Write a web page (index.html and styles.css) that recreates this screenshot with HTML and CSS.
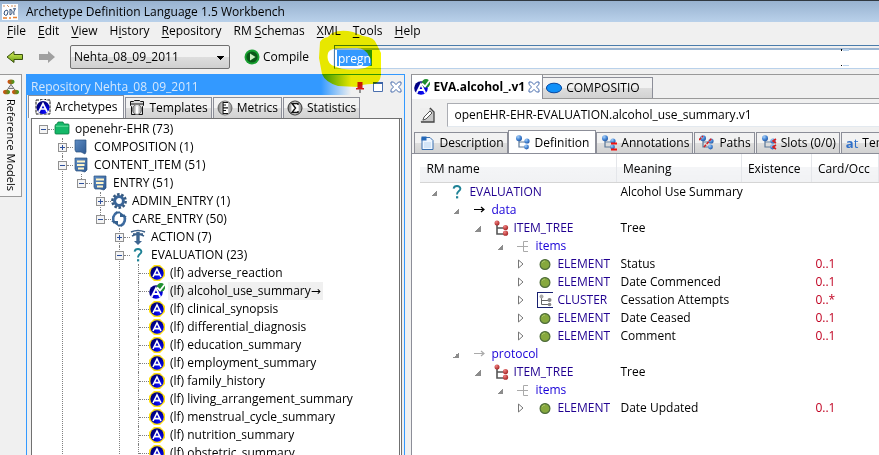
FILE: index.html
```html
<!DOCTYPE html>
<html lang="en">
<head>
<meta charset="utf-8">
<title>Archetype Definition Language 1.5 Workbench</title>
<link rel="stylesheet" href="styles.css">
</head>
<body>
<svg class="defs" width="0" height="0" aria-hidden="true">
  <defs>
    <linearGradient id="g-blue" x1="0" y1="0" x2="1" y2="1"><stop offset="0" stop-color="#5d8cc4"/><stop offset="1" stop-color="#2f5a92"/></linearGradient>
    <radialGradient id="g-ball" cx=".35" cy=".3" r=".8"><stop offset="0" stop-color="#a8d0f8"/><stop offset=".5" stop-color="#4a8ad8"/><stop offset="1" stop-color="#1c4f9c"/></radialGradient>
    <radialGradient id="g-red" cx=".35" cy=".3" r=".8"><stop offset="0" stop-color="#f08080"/><stop offset="1" stop-color="#a01c1c"/></radialGradient>
    <linearGradient id="g-lime" x1="0" y1="0" x2="0" y2="1"><stop offset="0" stop-color="#d8f060"/><stop offset="1" stop-color="#6aa010"/></linearGradient>
    <linearGradient id="g-mix" x1="0" y1="0" x2="1" y2="0"><stop offset="0" stop-color="#e04810"/><stop offset="1" stop-color="#38a020"/></linearGradient>
    <radialGradient id="g-navy" cx=".7" cy=".8" r=".7"><stop offset="0" stop-color="#1010ff"/><stop offset=".5" stop-color="#0000d0"/><stop offset="1" stop-color="#000080"/></radialGradient>
    <linearGradient id="g-silver" x1="0" y1="0" x2="1" y2="0"><stop offset="0" stop-color="#777"/><stop offset=".5" stop-color="#fff"/><stop offset="1" stop-color="#888"/></linearGradient>
    <symbol id="arch" viewBox="0 0 16 16"><path d="M5 0h6l5 5v6l-5 5H5l-5-5V5z" fill="#ffe010"/><circle cx="8" cy="8" r="6.700" fill="url(#g-navy)"/><path d="M4 12L8 4l4 8M5.500 9.600h5" fill="none" stroke="#fff" stroke-width="1.600"/></symbol>
    <symbol id="arch-ok" viewBox="0 0 16 16"><circle cx="7" cy="9" r="6.8" fill="url(#g-navy)"/><path d="M2.6 14L7 5l4.2 9M4.5 11h5" fill="none" stroke="#fff" stroke-width="1.8"/><circle cx="12" cy="4.2" r="4.2" fill="#209030"/><path d="M8 4.5l3 3L16 1" fill="none" stroke="#fff" stroke-width="1.8"/></symbol>
    <symbol id="arch-tab" viewBox="0 0 16 16"><path d="M1 1h4l2-1h3l1 1h4v14H1z" fill="#fff" stroke="#111" stroke-dasharray="3 1"/><circle cx="8" cy="8.5" r="6.5" fill="url(#g-navy)"/><path d="M3.8 13L8 4.6l4.2 8.4M5.6 10h4.8" fill="none" stroke="#fff" stroke-width="1.7"/></symbol>
    <symbol id="tpl" viewBox="0 0 16 16"><path d="M1.5 1.5h3l1-1h5l1 1h3v4l-1 1v8h-11v-8l-1-1z" fill="#ddd" stroke="#111"/><path d="M1 4h14" stroke="#111"/><ellipse cx="8" cy="9.5" rx="4.5" ry="5" fill="url(#g-silver)" stroke="#777"/><path d="M7 7h2v6H7z" fill="#fff"/></symbol>
    <symbol id="metric" viewBox="0 0 16 16"><circle cx="8" cy="8" r="7" fill="url(#g-silver)" stroke="#555" stroke-width=".8"/><path d="M5 2h6v12H5z" fill="#fff"/><path d="M6 2v12M6 2.5h5M6 5h3M6 7.8h5M6 10.5h3M6 13.5h5" stroke="#111" stroke-width="1.2"/></symbol>
    <symbol id="stat" viewBox="0 0 16 16"><circle cx="8" cy="8" r="7" fill="url(#g-silver)" stroke="#333"/><path d="M4.5 3h7v10h-7z" fill="#fff"/><path d="M11 5V3.5H5L8.5 8 5 12.5h6V11" fill="none" stroke="#111" stroke-width="1.4"/></symbol>
    <symbol id="folder" viewBox="0 0 16 16"><path d="M1 5q0-2 2-2l1-2h5l1 2h4q1 0 1 1v8q0 1-1 1H2q-1 0-1-1z" fill="#14b868" stroke="#087a40" stroke-width=".8"/><path d="M1.8 5.2h12.6" stroke="#6ae0a0"/></symbol>
    <symbol id="book" viewBox="0 0 16 16"><path d="M2 1h11v12l-1 2-4-2-5 0-1-2z" fill="url(#g-blue)" stroke="#2a5080" stroke-width=".7"/></symbol>
    <symbol id="booklines" viewBox="0 0 16 16"><path d="M2 1h12v12l-2 2-4-1-5 0-1-2z" fill="url(#g-blue)" stroke="#2a5080" stroke-width=".7"/><path d="M4 4.5h8M4 8h7.500M5 11.500h6" stroke="#fff4c8" stroke-width="2"/></symbol>
    <symbol id="gear" viewBox="0 0 16 16"><circle cx="8" cy="8" r="4.400" fill="none" stroke="#3a6598" stroke-width="3"/><circle cx="8" cy="8" r="6.700" fill="none" stroke="#34587f" stroke-width="2.400" stroke-dasharray="2.600 1.600"/></symbol>
    <symbol id="cycle" viewBox="0 0 16 16"><path d="M6 1.500A7 7 0 0 0 3.500 12M10 14.500A7 7 0 0 0 12.500 4" fill="none" stroke="#3d6ba0" stroke-width="2.6"/><path d="M0 10l7 0v5zM16 6l-7 0V1z" fill="#34608f"/><path d="M5 1.500h4M7 14.500h4" stroke="#34608f" stroke-width="2"/></symbol>
    <symbol id="action" viewBox="0 0 16 16"><path d="M1 3q7-3 14 0M2 7q6-3 12 0M3 5h10" fill="none" stroke="#3a5f88" stroke-width="1.500"/><path d="M6.300 3h3.400v9H12l-4 4-4-4h2.300z" fill="#3d6590"/></symbol>
    <symbol id="quest" viewBox="0 0 16 16"><path d="M4.600 4.600Q5 2 8 2t3.400 2.700C11.400 7.300 8 7 8 10.600" fill="none" stroke="#1f8296" stroke-width="1.900"/><path d="M7 12.200h2.200v2.200H7z" fill="#1f8296"/></symbol>
    <symbol id="arrow" viewBox="0 0 16 16"><path d="M3 7.500h10M10 5l3 2.500-3 2.500" fill="none" stroke="currentColor" stroke-width="1.200"/></symbol>
    <symbol id="tree-red" viewBox="0 0 16 16"><path d="M4 3v11h8M4 8h8" fill="none" stroke="#555" stroke-width="1.600"/><circle cx="4" cy="3" r="2.500" fill="url(#g-red)"/><circle cx="12.500" cy="7.500" r="2.600" fill="url(#g-red)"/><circle cx="12.500" cy="13.200" r="2.600" fill="url(#g-red)"/></symbol>
    <symbol id="fork" viewBox="0 0 16 16"><path d="M2 8.500h6M13 3.500H8.500v10H13M8 8.500h5" fill="none" stroke="#aaa"/></symbol>
    <symbol id="ball" viewBox="0 0 16 16"><circle cx="8" cy="8.500" r="4.900" fill="#86a83e" stroke="#4c6a38" stroke-width="1.200"/><path d="M5 7q1-2 3-2" fill="none" stroke="#a9c66a"/></symbol>
    <symbol id="cluster" viewBox="0 0 16 16"><path d="M0 0h16v1H1v14h15v1H0z" fill="#182070"/><path d="M4.500 5v7.500h8M4.500 8.500h8" fill="none" stroke="#666"/><circle cx="4.500" cy="4.500" r="2" fill="#aaa"/><circle cx="12.500" cy="8" r="2" fill="#888"/><circle cx="12.500" cy="12.500" r="1.800" fill="#888"/></symbol>
    <symbol id="tree-blue" viewBox="0 0 16 16"><path d="M4 3v9h8M4 7h7" fill="none" stroke="#5c7898" stroke-width="1.200"/><circle cx="4" cy="3.200" r="3" fill="url(#g-ball)"/><circle cx="12" cy="6" r="2.600" fill="url(#g-ball)"/><circle cx="11.500" cy="12" r="2.400" fill="url(#g-ball)"/></symbol>
    <symbol id="doc" viewBox="0 0 16 16"><path d="M3 2.500h8l3 3v9H3z" fill="#eef6ff" stroke="#3a70b0"/><path d="M5 8h7M5 10h7M5 12h7" stroke="#b8d4f0"/><path d="M2.500 1.500h5v4h-5z" fill="#2468b8"/></symbol>
    <symbol id="close" viewBox="0 0 12 12"><path d="M1 1h2.500L6 3.600 8.500 1H11v2.500L8.400 6 11 8.500V11H8.500L6 8.400 3.500 11H1V8.500L3.600 6 1 3.500z" fill="#fff" stroke="#4a6fae"/></symbol>
  </defs>
</svg>

<div class="app">
  <header class="titlebar">
    <svg class="logo" viewBox="0 0 16 16" aria-hidden="true"><path d="M0 0h16v16H0z" fill="#fff"/><path d="M1 2h2M5 1l2 2M9 2h2M13 1v2" stroke="#d09060"/><path d="M2 10q0-4 3-4 2 1 0 5-2 1-3-1M8 5v6q3-1 2-4T8 6M11 5q2-1 3 0M13 5q-2 3-1 6" fill="none" stroke="#32507a"/><path d="M1 14h4M7 14h2M11 13.500h4" stroke="#e88030" stroke-width="1.500"/></svg>
    <h1>Archetype Definition Language 1.5 Workbench</h1>
  </header>

  <nav class="menubar" aria-label="Main menu">
    <button><u>F</u>ile</button><button><u>E</u>dit</button><button><u>V</u>iew</button><button>H<u>i</u>story</button><button><u>R</u>epository</button><button>RM <u>S</u>chemas</button><button><u>X</u>ML</button><button><u>T</u>ools</button><button><u>H</u>elp</button>
  </nav>

  <div class="toolbar">
    <button class="nav" aria-label="Back"><svg viewBox="0 0 18 14"><path d="M1 7l7-5.500V4.500h8.500v5H8v3z" fill="url(#g-lime)" stroke="#3a5010"/></svg></button>
    <button class="nav" aria-label="Forward"><svg viewBox="0 0 18 14"><path d="M17 7l-7-6v3H1v6h9v3z" fill="#a0a0a0"/></svg></button>
    <select class="repo" aria-label="Repository"><option>Nehta_08_09_2011</option></select>
    <button class="compile"><svg viewBox="0 0 16 16" aria-hidden="true"><circle cx="8" cy="8" r="7.500" fill="#18a030"/><circle cx="8" cy="8" r="5.600" fill="#0a5818"/><path d="M6 4.500L11.500 8 6 11.500z" fill="#c8f0c0"/></svg>Compile</button>
    <div class="search">
      <input type="text" value="pregn" aria-label="Search">
      <svg class="marker-gap" viewBox="0 0 64 60" aria-hidden="true"><path d="M14 20q-6 1-6 8 2 6 6 9z" fill="#fff"/></svg>
      <svg class="marker" viewBox="0 0 64 60" aria-hidden="true"><path fill="#f6f600" fill-rule="evenodd" d="M1 12Q3 8 9 7l4-4q9-4 21-1l10 4q12 1 14 9l4 8v22q-1 9-9 9-10 0-14 3l-20-1Q6 52 3 44L0 28zM9 23Q7 33 15 36q12 6 31 2l6-3q1-6-2-9-4-8-12-8-14 0-24 1-4 1-5 4z"/></svg>
      <svg class="ticks" viewBox="0 0 8 18" aria-hidden="true"><path d="M2 1h6v2H2zM2 17h6v1H2z" fill="#b9d1ea"/><path d="M0 1h1v2H0zM0 17h1v1H0z"/></svg>
    </div>
  </div>

  <main class="work">
    <aside class="rail"><button><svg viewBox="0 0 16 16" aria-hidden="true"><path d="M8 4v4M3 12l5-5 5 5" fill="none" stroke="#777"/><ellipse cx="8" cy="2.800" rx="3.500" ry="2.300" fill="url(#g-mix)"/><path d="M5 9.500l3-4 3 4z" fill="#ddd" stroke="#777"/><ellipse cx="3.500" cy="13" rx="3.500" ry="2.300" fill="url(#g-mix)"/><ellipse cx="12.500" cy="13" rx="3.500" ry="2.300" fill="url(#g-mix)"/></svg><span>Reference Models</span></button></aside>

    <section class="panel">
      <header class="panel-head">
        <h2>Repository Nehta_08_09_2011</h2>
        <button aria-label="Pin"><svg viewBox="0 0 12 12"><path d="M3.500 1h5v6h1.500v1.500h-8V7h1.500z" fill="#d01818"/><path d="M6 8.500V12" stroke="#333"/></svg></button>
        <button aria-label="Maximize"><svg viewBox="0 0 12 12"><path d="M1.500 1.500h9v9h-9z" fill="#fff" stroke="#4a6fae"/><path d="M1 2h10" stroke="#3a62a8" stroke-width="2"/></svg></button>
        <button aria-label="Close"><svg><use href="#close"/></svg></button>
      </header>
      <div class="tabs repo-tabs" role="tablist">
        <button role="tab" aria-selected="true"><svg><use href="#arch-tab"/></svg>Archetypes</button>
        <button role="tab"><svg><use href="#tpl"/></svg>Templates</button>
        <button role="tab"><svg><use href="#metric"/></svg>Metrics</button>
        <button role="tab"><svg><use href="#stat"/></svg>Statistics</button>
      </div>
      <div class="tree-frame">
        <ul class="tree root">
          <li><div class="node"><i class="box"></i><svg><use href="#folder"/></svg><span>openehr-EHR (73)</span></div>
            <ul>
              <li><div class="node"><i class="box plus"></i><svg><use href="#book"/></svg><span>COMPOSITION (1)</span></div></li>
              <li class="more"><div class="node"><i class="box"></i><svg><use href="#booklines"/></svg><span>CONTENT_ITEM (51)</span></div>
                <ul>
                  <li><div class="node"><i class="box"></i><svg><use href="#booklines"/></svg><span>ENTRY (51)</span></div>
                    <ul>
                      <li><div class="node"><i class="box plus"></i><svg><use href="#gear"/></svg><span>ADMIN_ENTRY (1)</span></div></li>
                      <li><div class="node"><i class="box"></i><svg><use href="#cycle"/></svg><span>CARE_ENTRY (50)</span></div>
                        <ul>
                          <li><div class="node"><i class="box plus"></i><svg><use href="#action"/></svg><span>ACTION (7)</span></div></li>
                          <li class="more"><div class="node"><i class="box"></i><svg><use href="#quest"/></svg><span>EVALUATION (23)</span></div>
                            <ul>
                              <li><div class="node leaf"><svg><use href="#arch"/></svg><span>(lf) adverse_reaction</span></div></li>
                              <li><div class="node leaf"><svg><use href="#arch-ok"/></svg><span class="current">(lf) alcohol_use_summary<b class="to">→</b></span></div></li>
                              <li><div class="node leaf"><svg><use href="#arch"/></svg><span>(lf) clinical_synopsis</span></div></li>
                              <li><div class="node leaf"><svg><use href="#arch"/></svg><span>(lf) differential_diagnosis</span></div></li>
                              <li><div class="node leaf"><svg><use href="#arch"/></svg><span>(lf) education_summary</span></div></li>
                              <li><div class="node leaf"><svg><use href="#arch"/></svg><span>(lf) employment_summary</span></div></li>
                              <li><div class="node leaf"><svg><use href="#arch"/></svg><span>(lf) family_history</span></div></li>
                              <li><div class="node leaf"><svg><use href="#arch"/></svg><span>(lf) living_arrangement_summary</span></div></li>
                              <li><div class="node leaf"><svg><use href="#arch"/></svg><span>(lf) menstrual_cycle_summary</span></div></li>
                              <li><div class="node leaf"><svg><use href="#arch"/></svg><span>(lf) nutrition_summary</span></div></li>
                              <li class="more"><div class="node leaf"><svg><use href="#arch"/></svg><span>(lf) obstetric_summary</span></div></li>
                            </ul>
                          </li>
                        </ul>
                      </li>
                    </ul>
                  </li>
                </ul>
              </li>
            </ul>
          </li>
        </ul>
      </div>
    </section>

    <section class="editor">
      <div class="tabs doc-tabs" role="tablist">
        <button role="tab" aria-selected="true"><svg><use href="#arch-ok"/></svg>EVA.alcohol_.v1<svg class="x"><use href="#close"/></svg></button>
        <button role="tab"><svg viewBox="0 0 16 16"><ellipse cx="8" cy="8" rx="7.600" ry="4.800" fill="#1090f8" stroke="#0848a0"/></svg>COMPOSITIO</button>
      </div>
      <div class="editor-body">
        <div class="idrow">
          <button aria-label="Edit"><svg viewBox="0 0 16 16"><path d="M1 1h10l4 4v10H1z" fill="#c8c8c8"/><path d="M1 1h9v3L3 13l-2 2z" fill="#eee"/><path d="M2 15h13V5l-4-4" fill="none" stroke="#444" stroke-width="1.300"/><path d="M4 13l1-3 6-6 2 2-6 6z" fill="#fff" stroke="#555"/></svg></button>
          <input type="text" value="openEHR-EHR-EVALUATION.alcohol_use_summary.v1" aria-label="Archetype id">
        </div>
        <div class="tabs view-tabs" role="tablist">
          <button role="tab"><svg><use href="#doc"/></svg>Description</button>
          <button role="tab" aria-selected="true"><svg><use href="#tree-blue"/></svg>Definition</button>
          <button role="tab"><svg viewBox="0 0 16 16"><use href="#tree-blue"/><path d="M10 8.500h6M10 14.500h6" stroke="#f01010" stroke-width="2"/></svg>Annotations</button>
          <button role="tab"><svg viewBox="0 0 16 16"><use href="#tree-blue"/><path d="M0 5l4-4M5 12l8-9" stroke="#d82020" stroke-width="1.600" stroke-dasharray="3 1"/></svg>Paths</button>
          <button role="tab"><svg viewBox="0 0 16 16"><use href="#tree-blue"/><path d="M15 4l-3 2 3 2M15 10l-3 2 3 2" fill="none" stroke="#d82020" stroke-width="1.600"/></svg>Slots (0/0)</button>
          <button role="tab"><b class="at">a<em>t</em></b>Terms</button>
        </div>
        <table class="def">
          <colgroup><col class="c1"><col class="c2"><col class="c3"><col></colgroup>
          <thead><tr><th>RM name</th><th>Meaning</th><th>Existence</th><th>Card/Occ</th></tr></thead>
          <tbody>
            <tr><td><div class="cell"><i class="open"></i><svg><use href="#quest"/></svg>EVALUATION</div></td><td>Alcohol Use Summary</td><td></td><td></td></tr>
            <tr><td><div class="cell l1 attr"><i class="open"></i><svg class="dark"><use href="#arrow"/></svg>data</div></td><td></td><td></td><td></td></tr>
            <tr><td><div class="cell l2"><i class="open"></i><svg><use href="#tree-red"/></svg>ITEM_TREE</div></td><td>Tree</td><td></td><td></td></tr>
            <tr><td><div class="cell l3 attr"><i class="open"></i><svg><use href="#fork"/></svg>items</div></td><td></td><td></td><td></td></tr>
            <tr><td><div class="cell l4"><svg class="shut" viewBox="0 0 8 10"><path d="M1.500 1v8L6 5z"/></svg><svg><use href="#ball"/></svg>ELEMENT</div></td><td>Status</td><td></td><td>0..1</td></tr>
            <tr><td><div class="cell l4"><svg class="shut" viewBox="0 0 8 10"><path d="M1.500 1v8L6 5z"/></svg><svg><use href="#ball"/></svg>ELEMENT</div></td><td>Date Commenced</td><td></td><td>0..1</td></tr>
            <tr><td><div class="cell l4"><svg class="shut" viewBox="0 0 8 10"><path d="M1.500 1v8L6 5z"/></svg><svg><use href="#cluster"/></svg>CLUSTER</div></td><td>Cessation Attempts</td><td></td><td>0..*</td></tr>
            <tr><td><div class="cell l4"><svg class="shut" viewBox="0 0 8 10"><path d="M1.500 1v8L6 5z"/></svg><svg><use href="#ball"/></svg>ELEMENT</div></td><td>Date Ceased</td><td></td><td>0..1</td></tr>
            <tr><td><div class="cell l4"><svg class="shut" viewBox="0 0 8 10"><path d="M1.500 1v8L6 5z"/></svg><svg><use href="#ball"/></svg>ELEMENT</div></td><td>Comment</td><td></td><td>0..1</td></tr>
            <tr><td><div class="cell l1 attr"><i class="open"></i><svg class="pale"><use href="#arrow"/></svg>protocol</div></td><td></td><td></td><td></td></tr>
            <tr><td><div class="cell l2"><i class="open"></i><svg><use href="#tree-red"/></svg>ITEM_TREE</div></td><td>Tree</td><td></td><td></td></tr>
            <tr><td><div class="cell l3 attr"><i class="open"></i><svg><use href="#fork"/></svg>items</div></td><td></td><td></td><td></td></tr>
            <tr><td><div class="cell l4"><svg class="shut" viewBox="0 0 8 10"><path d="M1.500 1v8L6 5z"/></svg><svg><use href="#ball"/></svg>ELEMENT</div></td><td>Date Updated</td><td></td><td>0..1</td></tr>
          </tbody>
        </table>
      </div>
    </section>
  </main>
</div>
</body>
</html>
```
FILE: styles.css
```css
* { box-sizing: border-box; }

body {
  margin: 0;
  background: #f0f0f0;
  color: #000;
  font: 12px/18px "Open Sans", "Noto Sans", sans-serif;
}

button, input, select {
  font: inherit;
  color: inherit;
  margin: 0;
  padding: 0;
  border: 0;
  background: none;
}

h1, h2 { margin: 0; font: inherit; }
svg { display: block; flex: none; }
.defs { position: absolute; }

.app {
  display: flex;
  flex-direction: column;
  height: 100vh;
  overflow: hidden;
}

.titlebar {
  display: flex;
  align-items: center;
  gap: 8px;
  height: 22px;
  padding-left: 2px;
  border-top: 1px solid #303840;
  background: linear-gradient(#98b2d0, #b9d1ea);
  flex: none;
}
.logo { width: 16px; height: 16px; }

.menubar {
  display: flex;
  gap: 12px;
  padding: 0 7px;
  flex: none;
}
.menubar button { white-space: nowrap; }
.menubar u { text-underline-offset: 2px; }

.toolbar {
  display: flex;
  align-items: center;
  height: 34px;
  padding-left: 6px;
  flex: none;
}
.nav { margin-right: 14px; }
.nav svg { width: 18px; height: 14px; }
.repo {
  appearance: none;
  width: 160px;
  height: 24px;
  margin-right: 14px;
  padding: 0 3px;
  border: 1px solid #707070;
  border-radius: 2px;
  background:
    linear-gradient(to bottom left, #000 50%, transparent 50%) right 8px top 10px / 4px 4px no-repeat,
    linear-gradient(to bottom right, #000 50%, transparent 50%) right 4px top 10px / 4px 4px no-repeat,
    linear-gradient(#f2f2f2 50%, #dedede 50%, #d0d0d0);
}
.compile { display: flex; align-items: center; gap: 3px; margin-right: 25px; }
.compile svg { width: 16px; height: 16px; }

.search { position: relative; flex: 1; }
.search input {
  display: block;
  width: 100%;
  height: 24px;
  padding: 3px 3px 0;
  border-top: 1px solid #4a7cab;
  border-left: 1px solid #4a7cab;
  border-bottom: 1px solid #b9d1ea;
  color: #fff;
  background:
    linear-gradient(#3399ff, #3399ff) 2px 4px / 35px 16px no-repeat,
    linear-gradient(#f0f0f0 0 2px, #99b4d1 2px 4px, #fff 4px);
}
.marker, .marker-gap {
  position: absolute;
  left: -15px;
  top: -15px;
  width: 64px;
  height: 60px;
  pointer-events: none;
  z-index: 2;
}
.marker { mix-blend-mode: multiply; }
.ticks {
  position: absolute;
  right: 30px;
  top: 3px;
  width: 8px;
  height: 18px;
  pointer-events: none;
}

.work {
  display: grid;
  grid-template-columns: 22px minmax(0, 379fr) minmax(0, 469fr);
  column-gap: 4px;
  flex: 1;
  min-height: 0;
}

.rail button {
  display: flex;
  flex-direction: column;
  align-items: center;
  gap: 4px;
  width: 22px;
  padding: 4px 0 5px;
  border: 1px solid #999;
  border-left: 0;
  background: #f7f7f7;
}
.rail svg { width: 16px; height: 16px; }
.rail span { writing-mode: vertical-rl; font-size: 11px; line-height: 18px; }

.panel {
  display: flex;
  flex-direction: column;
  min-height: 0;
  border: 1px solid #3399ff;
  border-bottom: 0;
}
.panel-head {
  display: flex;
  align-items: center;
  gap: 6px;
  height: 20px;
  padding: 4px 2px 0 4px;
  color: #d6e8fc;
  background: linear-gradient(to right, #3399ff 78%, #f0f0f0 86%);
  flex: none;
}
.panel-head h2 { flex: 1; white-space: nowrap; }
.panel-head svg { width: 12px; height: 12px; }

.tabs { display: flex; align-items: flex-end; flex: none; }
.tabs button {
  display: flex;
  align-items: center;
  white-space: nowrap;
  border: 1px solid #8c8e98;
  border-bottom: 0;
  background: linear-gradient(#f2f2f2 50%, #dedede 50%, #d2d2d2);
}
.tabs button[aria-selected="true"] { background: #fff; }
.tabs svg { width: 16px; height: 16px; }

.repo-tabs { gap: 1px; padding: 0 1px; height: 23px; align-items: stretch; }
.repo-tabs button { gap: 4px; padding: 0 3px; margin-top: 2px; }
.repo-tabs button[aria-selected="true"] { padding: 0 6px; margin-top: 0; }

.tree-frame {
  flex: 1;
  min-height: 0;
  margin: 0 2px 0 4px;
  overflow: hidden;
  border: solid #707070;
  border-width: 1px 3px 0 1px;
  border-right-style: double;
  background: #fff;
}
.tree, .tree ul { margin: 0; padding: 0; list-style: none; }
.root { padding: 1px 0 0 2px; }
.tree ul { padding-left: 19px; }
.tree li { position: relative; }
.tree ul > li::before {
  content: "";
  position: absolute;
  left: 9px;
  top: 0;
  height: 100%;
  border-left: 1px dotted #808080;
}
.tree ul > li:last-child::before { height: 9px; }
.tree ul > li.more::before { height: 1000px; }
.node { display: flex; align-items: center; height: 18px; white-space: nowrap; }
.node svg { width: 16px; height: 16px; margin-right: 3px; }
.node span { padding: 0 2px; }
.node .current { background: #f0f0f0; }
.to { font-family: "DejaVu Sans", sans-serif; font-weight: 400; line-height: 1; }
.box {
  position: relative;
  width: 9px;
  height: 9px;
  margin: 0 6px 0 5px;
  border: 1px solid #919191;
  background: linear-gradient(#2c4f9c, #2c4f9c) center / 5px 1px no-repeat, #f4f4f4;
  flex: none;
}
.box.plus {
  background:
    linear-gradient(#2c4f9c, #2c4f9c) center / 5px 1px no-repeat,
    linear-gradient(#2c4f9c, #2c4f9c) center / 1px 5px no-repeat,
    #f4f4f4;
}
.box::after {
  content: "";
  position: absolute;
  left: 8px;
  top: 3px;
  width: 6px;
  border-top: 1px dotted #808080;
}
.node.leaf::before {
  content: "";
  width: 10px;
  margin-left: 10px;
  border-top: 1px dotted #808080;
}

.editor {
  display: flex;
  flex-direction: column;
  min-width: 0;
  min-height: 0;
  margin-left: 2px;
  border-top: 1px solid #999;
  border-left: 1px solid #8c8e98;
}
.doc-tabs { height: 24px; border-bottom: 1px solid #999; }
.doc-tabs button { gap: 4px; height: 21px; padding: 0 12px 0 3px; border-left: 0; }
.doc-tabs button[aria-selected="true"] { gap: 3px; height: 24px; margin-bottom: -1px; padding: 0 2px; border-top: 0; font-weight: 700; }
.doc-tabs .x { width: 12px; height: 12px; }

.editor-body {
  display: flex;
  flex-direction: column;
  flex: 1;
  min-height: 0;
  background: linear-gradient(#f0f0f0 55px, #fff 55px);
}
.idrow { display: flex; align-items: center; gap: 12px; height: 31px; padding-left: 7px; flex: none; }
.idrow svg { width: 16px; height: 16px; }
.idrow input { flex: 1; min-width: 0; height: 24px; padding: 0 6px; border: 1px solid #abadb3; border-width: 1px 0 1px 1px; border-bottom-color: #e3e9ef; background: #fff; }

.view-tabs { height: 24px; overflow: hidden; border-bottom: 1px solid #8c8e98; padding-left: 2px; }
.view-tabs button { gap: 4px; height: 21px; padding: 0 3px 0 4px; margin-right: 1px; flex: none; }
.view-tabs button[aria-selected="true"] { height: 24px; margin: 0 0 -1px -1px; padding: 0 6px; }
.at { color: #2f6fc8; font-size: 13px; }
.at em { font-style: normal; font-weight: 400; }

.def {
  width: 100%;
  table-layout: fixed;
  border-collapse: collapse;
  border-left: 8px solid #fff;
  background: #fff;
}
.c1 { width: 200px; }
.c2 { width: 125px; }
.c3 { width: 70px; }
.def th {
  height: 28px;
  padding: 3px 6px 0;
  text-align: left;
  font-weight: 400;
  border-right: 1px solid #e4e6ea;
  border-bottom: 1px solid #d5d5d5;
  background: linear-gradient(#fff 45%, #f4f5f7 45%, #f1f2f4);
}
.def td { height: 18px; padding: 0 4px; white-space: nowrap; }
.def td:first-child { padding: 0; color: #200090; }
.def td:last-child { color: #c00020; }
.cell { display: flex; align-items: center; height: 18px; }
.cell svg { width: 16px; height: 16px; margin-right: 4px; }
.l1 { padding-left: 22px; }
.l2 { padding-left: 44px; }
.l3 { padding-left: 66px; }
.l4 { padding-left: 88px; }
.attr { color: #1800d8; }
.cell .dark { color: #000; }
.cell .pale { color: #aaa; }
.open {
  width: 6px;
  height: 6px;
  margin: 2px 12px 0 11px;
  background: linear-gradient(to top left, #8c8c8c 50%, transparent 50%);
  flex: none;
}
.cell .shut { width: 8px; height: 10px; margin: 0 12px 0 9px; }
.shut path { fill: #fff; stroke: #777; }
```
